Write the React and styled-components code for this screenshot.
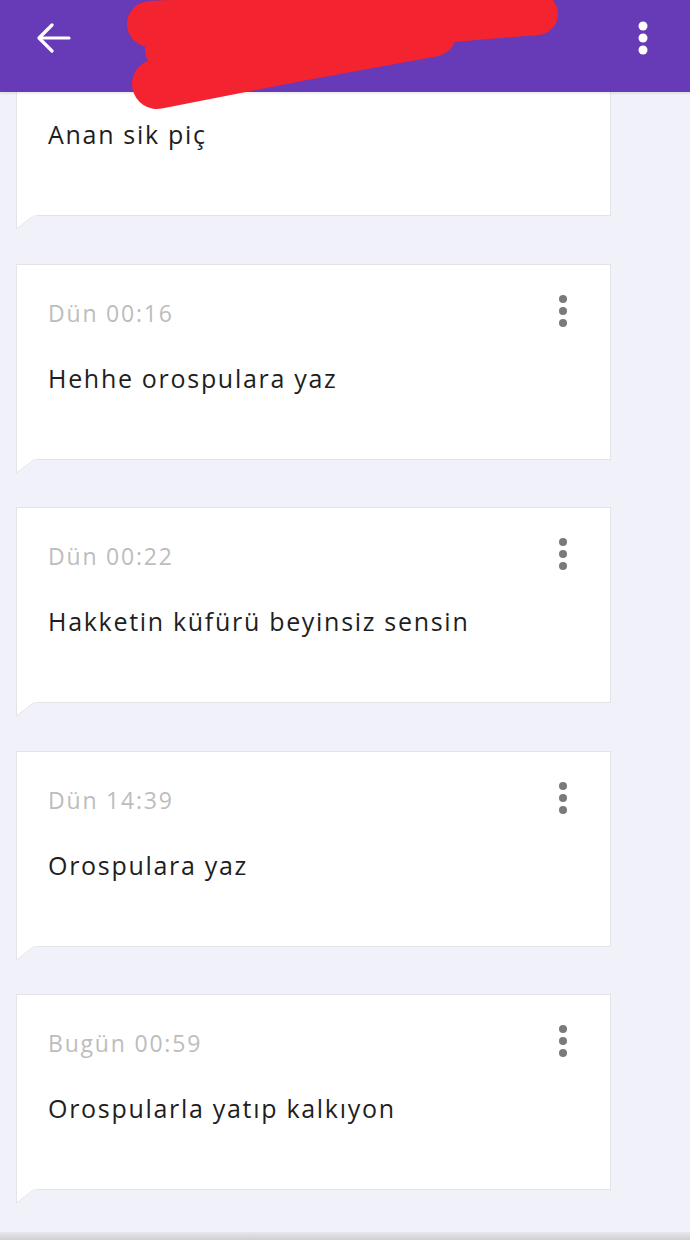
import styled, { createGlobalStyle } from "styled-components";

const GlobalStyle = createGlobalStyle`
  html, body {
    margin: 0;
    padding: 0;
    background: #f1f1f9;
    font-family: "Open Sans", "Noto Sans", sans-serif;
  }
`;

const Page = styled.div`
  position: relative;
  width: 690px;
  height: 1240px;
  overflow: hidden;
  background: #f1f1f9;
`;

const Header = styled.header`
  position: absolute;
  top: 0;
  left: 0;
  right: 0;
  height: 92px;
  background: #673ab7;
  display: flex;
  align-items: center;
  justify-content: space-between;
  padding: 0 41px 0 37px;
  box-sizing: border-box;
  z-index: 2;
  box-shadow: 0 1px 3px rgba(0, 0, 0, 0.12);
`;

const IconButton = styled.button`
  background: none;
  border: none;
  padding: 0;
  display: flex;
  align-items: center;
  justify-content: center;
  margin-top: -16px;
`;

const Scribble = styled.svg`
  position: absolute;
  top: 0;
  left: 0;
  width: 690px;
  height: 120px;
  z-index: 3;
  pointer-events: none;
`;

const List = styled.main`
  display: flex;
  flex-direction: column;
  gap: 47.5px;
  padding: 20px 0 0 16px;
`;

const Card = styled.article`
  position: relative;
  width: 595px;
  height: 196px;
  box-sizing: border-box;
  background: #ffffff;
  border: 1px solid #e3e3e8;
  padding: 0 31px;
`;

const Tail = styled.svg`
  position: absolute;
  left: -1px;
  bottom: -15px;
  width: 20px;
  height: 16px;
`;

const TopRow = styled.div`
  display: flex;
  align-items: center;
  justify-content: space-between;
  height: 96px;
  margin-right: 10px;

  svg {
    margin-top: -4px;
  }
`;

const Stamp = styled.span`
  color: #bdbdbd;
  font-size: 23px;
  font-weight: 500;
  letter-spacing: 1.8px;
`;

const Message = styled.p`
  margin: 0;
  color: #1e1e1e;
  font-size: 25px;
  font-weight: 500;
  line-height: 34px;
  letter-spacing: 1.7px;
`;

const BottomShade = styled.div`
  position: absolute;
  left: 0;
  right: 0;
  bottom: 0;
  height: 8px;
  background: linear-gradient(#e6e6ec, #cfcfd6);
`;

function Dots({ color, r = 4 }) {
  return (
    <svg width="12" height="34" viewBox="0 0 12 34">
      <circle cx="6" cy="5" r={r} fill={color} />
      <circle cx="6" cy="17" r={r} fill={color} />
      <circle cx="6" cy="29" r={r} fill={color} />
    </svg>
  );
}

const messages = [
  { time: "", text: "Anan sik piç" },
  { time: "Dün 00:16", text: "Hehhe orospulara yaz" },
  { time: "Dün 00:22", text: "Hakketin küfürü beyinsiz sensin" },
  { time: "Dün 14:39", text: "Orospulara yaz" },
  { time: "Bugün 00:59", text: "Orospularla yatıp kalkıyon" },
];

export default function App() {
  return (
    <Page>
      <GlobalStyle />
      <Header>
        <IconButton aria-label="back">
          <svg width="34" height="30" viewBox="0 0 34 30" fill="none" stroke="#fff" strokeWidth="3.2" strokeLinecap="round" strokeLinejoin="round">
            <path d="M32 15H3" />
            <path d="M15 2L2 15l13 13" />
          </svg>
        </IconButton>
        <IconButton aria-label="menu">
          <Dots color="#ffffff" r={4.5} />
        </IconButton>
      </Header>
      <Scribble viewBox="0 0 690 120">
        <g fill="none" stroke="#f3232f" strokeLinecap="round" strokeLinejoin="round">
          <path d="M150 24 L300 16 L432 28" strokeWidth="46" />
          <path d="M157 84 L300 56 L432 32" strokeWidth="50" />
          <path d="M165 50 L320 36" strokeWidth="40" />
          <path d="M200 4 L540 4" strokeWidth="10" />
          <path d="M320 8 L540 10" strokeWidth="30" />
          <path d="M440 22 L537 14" strokeWidth="42" />
        </g>
      </Scribble>
      <List>
        {messages.map((m, i) => (
          <Card key={i}>
            <TopRow>
              <Stamp>{m.time}</Stamp>
              <Dots color="#7a7a7a" r={4} />
            </TopRow>
            <Message>{m.text}</Message>
            <Tail viewBox="0 0 20 16">
              <polygon points="0.5,0 20,0 20,1 0.5,15" fill="#ffffff" />
              <path d="M0.5 0 V15 L18 1.5" fill="none" stroke="#e3e3e8" strokeWidth="1" />
            </Tail>
          </Card>
        ))}
      </List>
      <BottomShade />
    </Page>
  );
}
